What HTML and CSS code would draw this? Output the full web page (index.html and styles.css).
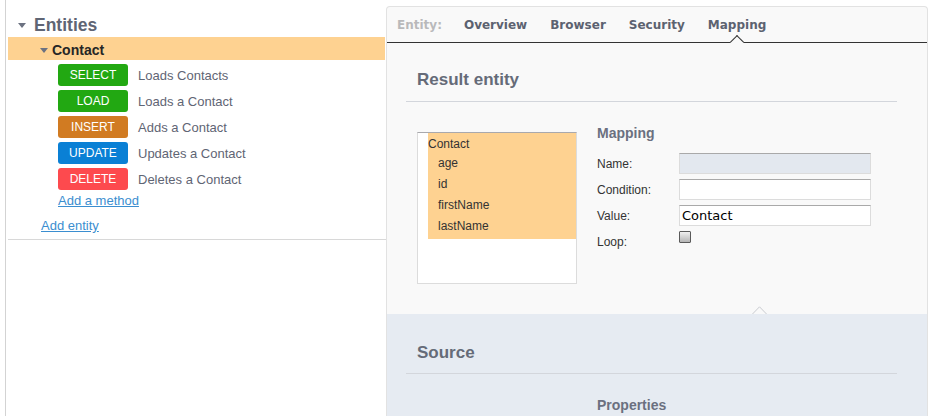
FILE: index.html
```html
<!DOCTYPE html>
<html>
<head>
<meta charset="utf-8">
<link rel="stylesheet" href="styles.css">
</head>
<body>
<div class="page">
  <aside class="sidebar">
    <div class="tree">
      <div class="tree-head"><span class="caret"></span>Entities</div>
      <div class="entity-row"><span class="caret"></span>Contact</div>
      <ul class="methods">
        <li><span class="badge select">SELECT</span><span class="desc">Loads Contacts</span></li>
        <li><span class="badge load">LOAD</span><span class="desc">Loads a Contact</span></li>
        <li><span class="badge insert">INSERT</span><span class="desc">Adds a Contact</span></li>
        <li><span class="badge update">UPDATE</span><span class="desc">Updates a Contact</span></li>
        <li><span class="badge delete">DELETE</span><span class="desc">Deletes a Contact</span></li>
      </ul>
      <a class="add-method" href="#">Add a method</a>
      <a class="add-entity" href="#">Add entity</a>
    </div>
  </aside>
  <main class="panel">
    <nav class="tabs">
      <span class="tab-label">Entity:</span>
      <a class="tab" href="#">Overview</a>
      <a class="tab" href="#">Browser</a>
      <a class="tab" href="#">Security</a>
      <a class="tab active" href="#">Mapping</a>
    </nav>
    <section class="upper">
      <h2 class="section-title first">Result entity</h2>
      <div class="result-body">
        <div class="tree-box">
          <div class="tree-sel">
            <div class="tree-root">Contact</div>
            <div class="tree-item">age</div>
            <div class="tree-item">id</div>
            <div class="tree-item">firstName</div>
            <div class="tree-item">lastName</div>
          </div>
        </div>
        <div class="mapping">
          <h3 class="sub-title">Mapping</h3>
          <div class="form-grid">
            <label class="lbl">Name:</label>
            <input class="field readonly" type="text" value="">
            <label class="lbl">Condition:</label>
            <input class="field" type="text" value="">
            <label class="lbl">Value:</label>
            <input class="field" type="text" value="Contact">
            <label class="lbl">Loop:</label>
            <input class="check" type="checkbox">
          </div>
        </div>
      </div>
    </section>
    <section class="lower">
      <svg class="notch" width="16" height="8" viewBox="0 0 16 8"><polyline points="0.5,8 7.5,0.8 14.5,8" fill="none" stroke="#c9cbd0" stroke-width="1"/></svg>
      <h2 class="section-title second">Source</h2>
      <h3 class="sub-title props">Properties</h3>
    </section>
  </main>
</div>
</body>
</html>
```
FILE: styles.css
```css
html, body {
  margin: 0;
  height: 100%;
  overflow: hidden;
  background: #fff;
}
body {
  font-family: "Liberation Sans", Arial, sans-serif;
  color: #333;
}
.page {
  display: flex;
  align-items: flex-start;
  height: 416px;
  padding-left: 5px;
  overflow: hidden;
}
.sidebar {
  box-sizing: border-box;
  width: 379px;
  height: 416px;
  border-left: 1px solid #d3d3d3;
  padding-left: 2px;
  flex: none;
}
.tree {
  border-bottom: 1px solid #d8d8d8;
  padding-bottom: 5px;
  margin-right: -2px;
}
.caret {
  display: inline-block;
  width: 0;
  height: 0;
  border-left: 4px solid transparent;
  border-right: 4px solid transparent;
  border-top: 5px solid #6c7281;
  vertical-align: middle;
}
.tree-head {
  box-sizing: border-box;
  height: 37px;
  padding: 13px 0 0 10px;
  line-height: 24px;
  font-size: 17.5px;
  font-weight: bold;
  color: #5f6574;
}
.tree-head .caret {
  margin-right: 8px;
  position: relative;
  top: -1px;
}
.entity-row {
  box-sizing: border-box;
  height: 23px;
  margin-right: 1px;
  padding: 4px 0 0 32px;
  line-height: 19px;
  background: #fed291;
  font-size: 14px;
  font-weight: bold;
  color: #262626;
}
.entity-row .caret {
  margin-right: 4px;
  position: relative;
  top: -1px;
}
.methods {
  list-style: none;
  margin: 4px 0 0;
  padding: 0 0 0 50px;
  display: flex;
  flex-direction: column;
  gap: 4px;
}
.methods li {
  display: flex;
  align-items: center;
  height: 22px;
}
.badge {
  width: 70px;
  height: 22px;
  line-height: 22px;
  border-radius: 3px;
  color: #fff;
  font-size: 12px;
  text-align: center;
}
.badge.select, .badge.load { background: #22a812; }
.badge.insert { background: #d17b22; }
.badge.update { background: #0a80d5; }
.badge.delete { background: #fd4a4e; }
.desc {
  margin-left: 10px;
  font-size: 13px;
  color: #5f6574;
}
.add-method, .add-entity {
  display: block;
  width: max-content;
  font-size: 13px;
  line-height: 16px;
  color: #3b8ed0;
  text-decoration: underline;
}
.add-method {
  margin: 3px 0 0 50px;
}
.add-entity {
  margin: 9px 0 0 33px;
}

.panel {
  box-sizing: border-box;
  width: 542px;
  height: 410px;
  margin: 6px 0 0 2px;
  border: 1px solid #e2e2e2;
  border-bottom: 0;
  border-radius: 4px 4px 0 0;
  background: #f9f9f9;
  overflow: hidden;
  flex: none;
  display: flex;
  flex-direction: column;
}
.tabs {
  display: flex;
  align-items: flex-start;
  gap: 23px;
  padding: 10px 0 0 10px;
  box-sizing: border-box;
  height: 36px;
  flex: none;
  border-bottom: 1px solid #333;
  font-family: "DejaVu Sans", Verdana, sans-serif;
  font-size: 12px;
  font-weight: bold;
  line-height: 16px;
  position: relative;
}
.tab-label {
  color: #b9b9bb;
  margin-right: -1px;
}
.tab {
  color: #5c6270;
  text-decoration: none;
  position: relative;
}
.tab.active::after {
  content: "";
  position: absolute;
  left: calc(50% - 5px);
  top: calc(100% + 4px);
  width: 10px;
  height: 10px;
  box-sizing: border-box;
  background: #f9f9f9;
  border-top: 1px solid #333;
  border-left: 1px solid #333;
  transform: rotate(45deg);
  z-index: 2;
}
.upper {
  margin: 0 30px 0 19px;
  padding-bottom: 30px;
  flex: none;
}
.section-title {
  margin: 0;
  padding: 27px 0 11px 11px;
  line-height: 20px;
  font-size: 17px;
  font-weight: bold;
  color: #656b78;
  border-bottom: 1px solid #d3d6dc;
}
.result-body {
  display: flex;
  align-items: flex-start;
  gap: 20px;
  padding: 23px 0 0 11px;
}
.tree-box {
  box-sizing: border-box;
  width: 160px;
  height: 152px;
  margin-top: 7px;
  background: #fff;
  border: 1px solid #dcdcdc;
  border-top-color: #a9a9ad;
  flex: none;
}
.tree-sel {
  margin-left: 10px;
  padding: 2px 0 2px;
  background: #fed291;
  font-size: 12px;
  color: #333;
}
.tree-root {
  line-height: 18px;
}
.tree-item {
  line-height: 21px;
  padding-left: 10px;
}
.sub-title {
  margin: 0;
  line-height: 16px;
  font-size: 14px;
  font-weight: bold;
  color: #6b7080;
}
.form-grid {
  display: grid;
  grid-template-columns: 82px 192px;
  grid-auto-rows: 21px;
  row-gap: 5px;
  margin-top: 12px;
}
.lbl {
  align-self: center;
  font-size: 12px;
  color: #333;
}
.field {
  box-sizing: border-box;
  width: 192px;
  height: 21px;
  margin: 0;
  padding: 0 2px;
  border: 1px solid #dcdcdc;
  border-top-color: #a9a9a9;
  background: #fff;
  font-family: "DejaVu Sans", sans-serif;
  font-size: 13px;
  color: #000;
  outline: none;
}
.field.readonly {
  background: #e3e8ef;
}
.check {
  -webkit-appearance: none;
  appearance: none;
  box-sizing: border-box;
  width: 12px;
  height: 12px;
  margin: 0;
  border: 1px solid #5a5a5a;
  border-radius: 1px;
  background: linear-gradient(#f0f0f0, #b5b5b5);
  align-self: start;
}
.lower {
  position: relative;
  flex: 1;
  background: #e6ebf2;
  padding: 0 30px 0 19px;
}
.notch {
  position: absolute;
  left: 365px;
  top: -8px;
  display: block;
}
.section-title.second {
  padding-top: 29px;
  padding-bottom: 10px;
}
.props {
  margin: 23px 0 0 191px;
}
```
